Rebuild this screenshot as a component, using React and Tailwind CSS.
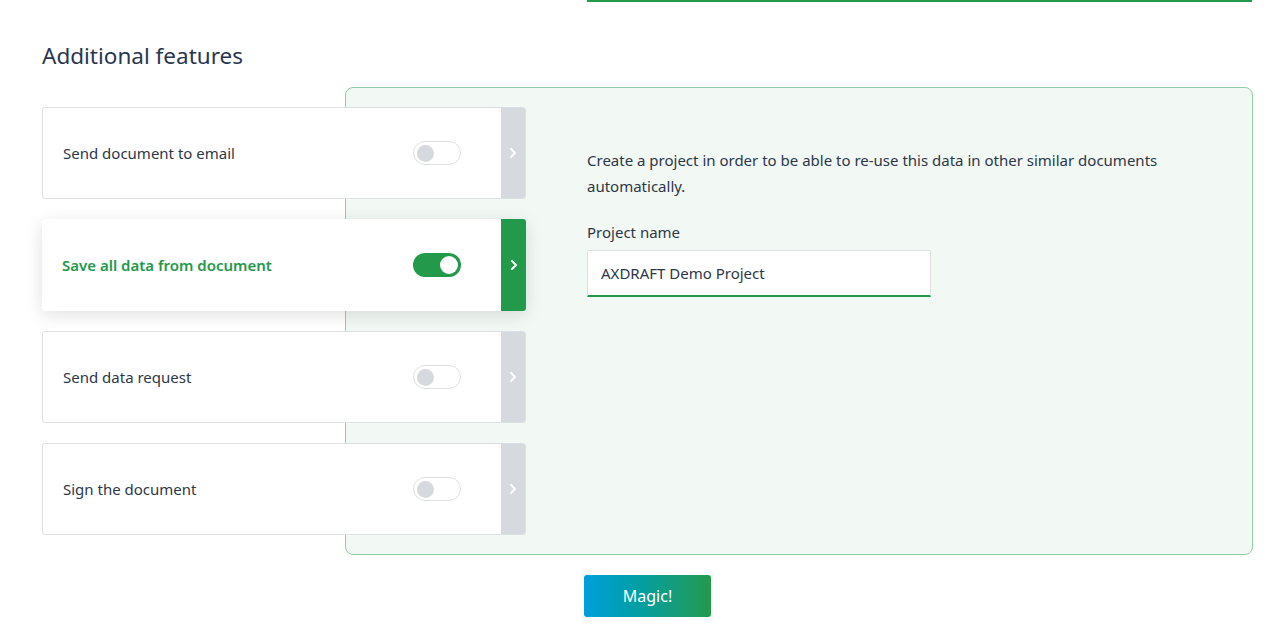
import React from "react";

const features = [
  { label: "Send document to email", active: false },
  { label: "Save all data from document", active: true },
  { label: "Send data request", active: false },
  { label: "Sign the document", active: false },
];

function Chevron() {
  return (
    <svg width="8" height="12" viewBox="0 0 8 12" fill="none">
      <path d="M2 2l4 4-4 4" stroke="white" strokeWidth="2" strokeLinecap="round" strokeLinejoin="round" />
    </svg>
  );
}

function Toggle({ on }) {
  return on ? (
    <div className="w-[48px] h-[24px] rounded-full bg-[#23994b] flex items-center justify-end pr-[3px]">
      <div className="w-[18px] h-[18px] rounded-full bg-white" />
    </div>
  ) : (
    <div className="w-[48px] h-[24px] rounded-full bg-white border border-[#dcdfe4] flex items-center pl-[3px]">
      <div className="w-[17px] h-[17px] rounded-full bg-[#d6d9de]" />
    </div>
  );
}

function Card({ label, active }) {
  return (
    <div
      className={
        "relative z-10 flex h-[92px] rounded-[3px] bg-white overflow-hidden " +
        (active
          ? "shadow-[0_4px_18px_rgba(0,0,0,0.12)]"
          : "border border-[#dcdfe4]")
      }
    >
      <div className="flex-1 flex items-center justify-between pl-[20px] pr-[40px]">
        <span
          className={
            "text-[15px] " +
            (active ? "text-[#23994b] font-semibold" : "text-[#2d3748]")
          }
        >
          {label}
        </span>
        <Toggle on={active} />
      </div>
      <div
        className={
          "flex items-center justify-center " +
          (active ? "w-[25px] bg-[#23994b]" : "w-[24px] bg-[#d6d9de]")
        }
      >
        <Chevron />
      </div>
    </div>
  );
}

export default function App() {
  return (
    <div
      className="min-h-[628px] bg-white"
      style={{ fontFamily: '"Noto Sans", "Open Sans", sans-serif' }}
    >
      <div className="flex">
        <div className="ml-[587px] w-[665px] h-[2px] bg-[#23994b]" />
      </div>
      <div className="ml-[42px] w-[1211px]">
        <h2 className="mt-[39px] text-[22.5px] leading-[30px] text-[#2a3650]">
          Additional features
        </h2>
        <div className="mt-[16px] flex items-stretch">
          <div className="w-[484px] shrink-0 flex flex-col gap-[20px] py-[20px] relative z-10">
            {features.map((f) => (
              <Card key={f.label} {...f} />
            ))}
          </div>
          <div className="flex-1 ml-[-181px] border border-[#8fd0a3] bg-[#f2f8f4] rounded-[8px] pl-[241px] pr-[60px] pt-[59px]">
            <p className="text-[15px] leading-[26px] text-[#2d3748]">
              Create a project in order to be able to re-use this data in other similar documents automatically.
            </p>
            <label className="block mt-[21px] text-[15px] leading-[24px] text-[#2d3748]">
              Project name
            </label>
            <div className="mt-[6px] w-[344px] h-[47px] bg-white border border-[#dcdfe4] border-b-2 border-b-[#23994b] rounded-t-[2px] flex items-center pl-[13px] text-[15px] text-[#2d3748]">
              AXDRAFT Demo Project
            </div>
          </div>
        </div>
        <div className="flex justify-center mt-[20px]">
          <button className="w-[127px] h-[42px] rounded-[3px] bg-gradient-to-r from-[#019fdd] to-[#23994b] text-white text-[16px]">
            Magic!
          </button>
        </div>
      </div>
    </div>
  );
}
